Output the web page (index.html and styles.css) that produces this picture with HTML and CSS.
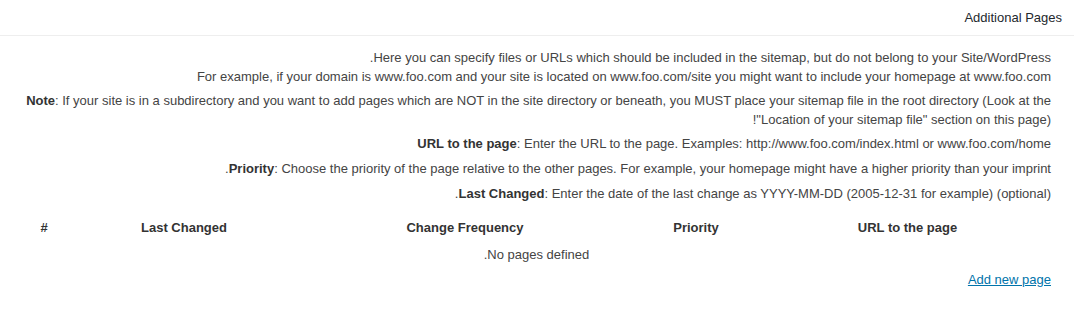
FILE: index.html
```html
<!DOCTYPE html>
<html lang="en" dir="rtl">
<head>
<meta charset="utf-8">
<title>Additional Pages</title>
<link rel="stylesheet" href="styles.css">
</head>
<body>
<div class="postbox">
  <h3 class="hndle">Additional Pages</h3>
  <div class="inside">
    <p class="l1">Here you can specify files or URLs which should be included in the sitemap, but do not belong to your Site/WordPress.<br>For example, if your domain is www.foo.com and your site is located on www.foo.com/site you might want to include your homepage at www.foo.com</p>
    <p><b>Note</b>: If your site is in a subdirectory and you want to add pages which are NOT in the site directory or beneath, you MUST place your sitemap file in the root directory (Look at the "Location of your sitemap file" section on this page)!</p>
    <p><b>URL to the page</b>: Enter the URL to the page. Examples: http://www.foo.com/index.html or www.foo.com/home</p>
    <p><b>Priority</b>: Choose the priority of the page relative to the other pages. For example, your homepage might have a higher priority than your imprint.</p>
    <p><b>Last Changed</b>: Enter the date of the last change as YYYY-MM-DD (2005-12-31 for example) (optional).</p>
    <table class="pages">
      <thead>
        <tr>
          <th class="c-url">URL to the page</th>
          <th class="c-prio">Priority</th>
          <th class="c-freq">Change Frequency</th>
          <th class="c-last">Last Changed</th>
          <th class="c-num">#</th>
        </tr>
      </thead>
      <tbody>
        <tr><td colspan="5" class="empty">No pages defined.</td></tr>
      </tbody>
    </table>
    <div class="actions"><a href="#">Add new page</a></div>
  </div>
</div>
</body>
</html>
```

FILE: styles.css
```css
html, body {
  margin: 0;
  padding: 0;
  background: #fff;
}
body {
  font-family: "Liberation Sans", Arial, sans-serif;
  font-size: 13px;
  color: #444;
}
.postbox {
  direction: rtl;
}
.hndle {
  margin: 0;
  font-size: 13px;
  font-weight: normal;
  color: #23282d;
  line-height: 18px;
  padding: 9px 12px 8px 12px;
  border-bottom: 1px solid #eeeeee;
}
.inside {
  padding: 13px 23px 0 22px;
}
.inside p {
  margin: 0 0 6px 0;
  line-height: 18.6px;
}
.inside p b {
  color: #333;
}
.pages {
  width: 100%;
  border-collapse: collapse;
  margin-top: 8px;
}
.pages th {
  font-weight: bold;
  color: #333;
  text-align: center;
  padding: 8px 0;
  line-height: 18px;
}
.c-url { width: 287px; }
.c-prio { width: 136px; }
.c-freq { width: 326px; }
.c-last { width: 236px; }
.c-num { width: 44px; }
.pages td.empty {
  text-align: center;
  padding: 1px 0 6px 0;
  line-height: 18px;
}
.actions {
  text-align: right;
  padding-top: 1px;
  line-height: 18px;
}
.actions a {
  color: #0073aa;
  text-decoration: underline;
}
```
